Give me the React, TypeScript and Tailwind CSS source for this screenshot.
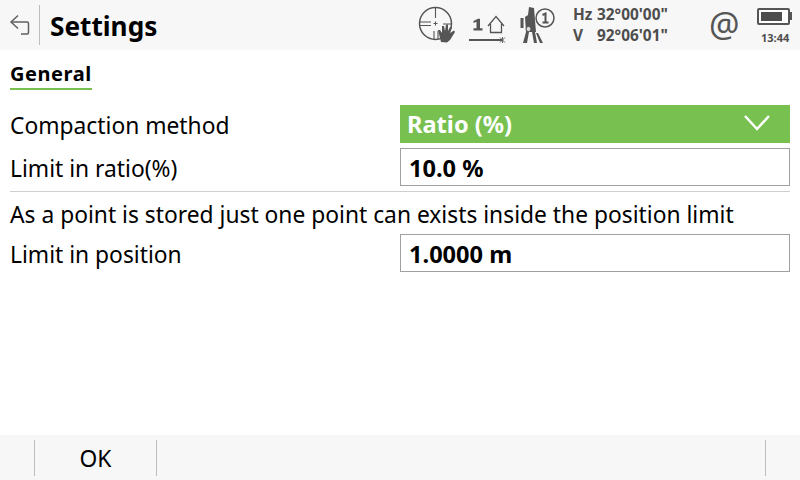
import React from "react";

const font = { fontFamily: '"Noto Sans", sans-serif' };

function Row({ label, children, cls }: { label: string; children: React.ReactNode; cls: string }) {
  return (
    <div className={`flex items-center pl-[10px] pr-[10px] ${cls}`}>
      <div className="w-[390px] text-[22.8px] leading-[28px] pt-[3px] text-black">{label}</div>
      <div className="flex-1 h-full">{children}</div>
    </div>
  );
}

function Input({ value }: { value: string }) {
  return (
    <div className="h-full border border-[#a0a0a0] bg-white flex items-center pl-[8px] pt-[3px] text-[23.6px] font-bold text-black">
      {value}
    </div>
  );
}

export default function App() {
  return (
    <div className="w-[800px] h-[480px] bg-white flex flex-col overflow-hidden" style={font}>
      <header className="h-[50px] bg-[#f7f7f7] flex items-center shrink-0">
        <div className="w-[40px] h-[40px] border-r border-[#bdbdbd] relative shrink-0">
          <svg width="40" height="50" viewBox="0 5 40 50" fill="none" stroke="#606060" strokeWidth="1.5" className="absolute left-0 top-0">
            <path d="M11 22 H27 Q28.5 22 28.5 23.5 V32.5 Q28.5 34 27 34 H21" />
            <path d="M18 15.5 L11 22 L18 28.5" />
          </svg>
        </div>
        <h1 className="ml-[10px] text-[26.2px] font-bold text-black leading-none w-[368px] pt-[2px] shrink-0">Settings</h1>
        <svg width="38" height="50" viewBox="418 0 38 50" fill="none" className="shrink-0" stroke="#555" strokeWidth="1.5">
          <circle cx="435.5" cy="23.5" r="16" />
          <path d="M435.5 7 V18 M419 22 H431 M419 25.5 H431 M443 24 H452 M434 31 V40 M438 31 V40" strokeWidth="1.1" />
          <path d="M435.5 21.5 V25.5 M433.5 23.5 H437.5" strokeWidth="1" />
          <path d="M441 42 L439 34 L438 30 L440 30 L442 33 L442 26 L444 26 L445 31 L446 24.5 L448 24.5 L448 31 L450 27 L452 27.5 L450 33 L454 30.5 L455 32 L450 40 L447 42.5 Z" fill="#555" stroke="none" />
        </svg>
        <div className="w-[12px] shrink-0" />
        <svg width="40" height="50" viewBox="468 0 40 50" fill="none" className="shrink-0">
          <path d="M473.5 21 L478 18.8 H480 V28.2 H482.5 V30.5 H473.5 V28.2 H476.5 V21.8 L473.5 23 Z" fill="#555" />
          <path d="M488 26 L496 16.5 L504 26 M490.5 24 V32.5 H501.5 V24" stroke="#555" strokeWidth="1.3" />
          <path d="M469 40 H503" stroke="#555" strokeWidth="2" />
          <path d="M500 37.5 L505 42.5 M505 37.5 L500 42.5 M502.5 37 V43" stroke="#666" strokeWidth="1" />
        </svg>
        <div className="w-[11px] shrink-0" />
        <svg width="38" height="50" viewBox="519 0 38 50" fill="none" className="shrink-0">
          <path d="M529 7 L534 8 L536 32 H526 L525 17 L528 15 Z" fill="#555" />
          <rect x="520.5" y="18" width="3" height="10" fill="#555" />
          <path d="M526 32 H529 L527 43 H523 Z M532 32 H535 L537 43 H534 Z M538 33 L543 43 H540 L536 33 Z" fill="#555" />
          <circle cx="528.5" cy="29" r="2.5" fill="#ddd" stroke="#555" />
          <circle cx="545" cy="18" r="9" fill="#f7f7f7" stroke="#555" strokeWidth="1.5" />
          <path d="M542.5 15 L545.5 13.5 V22 M542.5 22.5 H548.5" stroke="#555" strokeWidth="2" />
        </svg>
        <div className="w-[16px] shrink-0" />
        <div className="w-[136px] text-[15.4px] font-bold text-[#4d4d4d] leading-[21px] shrink-0 mt-[-1px]">
          <div className="flex">
            <span className="w-[24px]">Hz</span>
            <span>32°00'00"</span>
          </div>
          <div className="flex">
            <span className="w-[24px]">V</span>
            <span>92°06'01"</span>
          </div>
        </div>
        <div className="text-[34px] leading-none text-[#555] mt-[-2px] w-[48px] shrink-0">@</div>
        <div className="flex flex-col items-start w-[36px] shrink-0">
          <div className="h-[17px] flex items-center">
            <div className="w-[33px] h-[17px] border-2 border-[#555] rounded-[2px] p-[2px] bg-white">
              <div className="w-[21px] h-full bg-[#4d4d4d]" />
            </div>
            <div className="w-[2px] h-[8px] bg-[#555]" />
          </div>
          <div className="text-[11px] font-bold text-[#4d4d4d] leading-none mt-[7px] ml-[4px]">13:44</div>
        </div>
      </header>

      <main className="flex-1 flex flex-col">
        <div className="px-[10px] pt-[10px] h-[55px]">
          <span className="inline-block text-[20px] font-bold text-black leading-[27px] tracking-[0.55px] border-b-2 border-[#78c04f] pb-[1px]">
            General
          </span>
        </div>
        <Row label="Compaction method" cls="h-[38px]">
          <div className="h-full bg-[#78c04f] flex items-center justify-between pl-[7px] pr-[20px] pt-[2px] text-white text-[23.6px] font-bold">
            <span>Ratio (%)</span>
            <svg width="26" height="16" viewBox="0 0 26 16" fill="none" stroke="#fff" strokeWidth="2.5" className="mt-[-4px]">
              <path d="M1 1 L13 14 L25 1" />
            </svg>
          </div>
        </Row>
        <Row label="Limit in ratio(%)" cls="h-[38px] mt-[5px]">
          <Input value="10.0 %" />
        </Row>
        <div className="h-px bg-[#cfcfcf] mx-[10px] mt-[5px]" />
        <div className="px-[10px] mt-[9px] h-[28px] text-[22.8px] leading-[28px] text-black whitespace-nowrap">
          As a point is stored just one point can exists inside the position limit
        </div>
        <Row label="Limit in position" cls="h-[38px] mt-[5px]">
          <Input value="1.0000 m" />
        </Row>
      </main>

      <footer className="h-[45px] bg-[#f7f7f7] flex items-start pt-[5px] shrink-0">
        <div className="w-[35px] h-[36px] border-r border-[#bdbdbd]" />
        <div className="w-[122px] h-[36px] border-r border-[#bdbdbd] flex items-center justify-center text-[22.8px] text-black pt-[3px]">
          OK
        </div>
        <div className="w-[609px] h-[36px] border-r border-[#bdbdbd]" />
      </footer>
    </div>
  );
}
